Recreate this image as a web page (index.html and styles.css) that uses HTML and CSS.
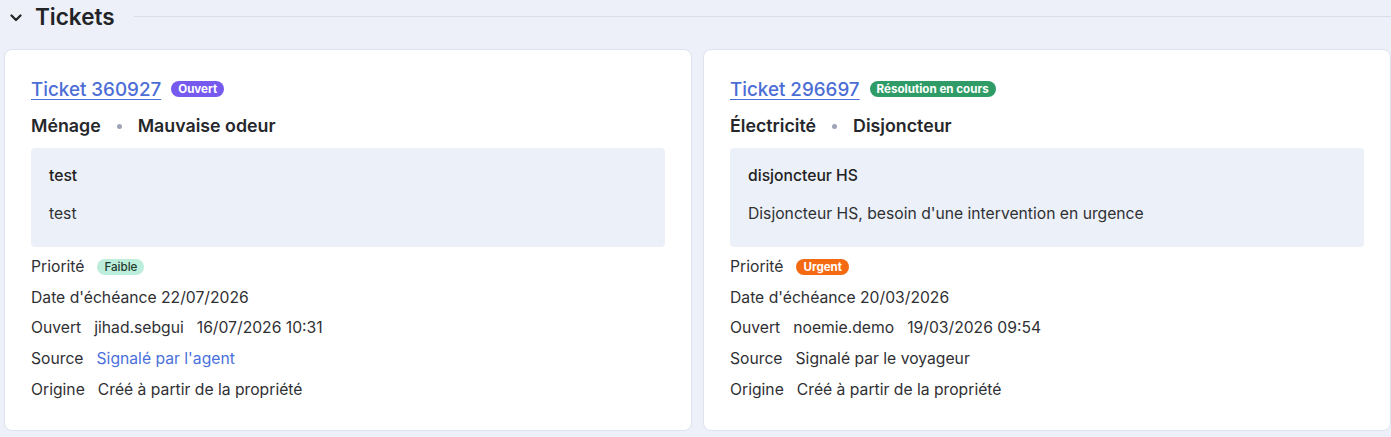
FILE: index.html
```html
<!DOCTYPE html>
<html lang="fr">
<head>
<meta charset="utf-8">
<title>Tickets</title>
<link rel="stylesheet" href="styles.css">
</head>
<body>
<section class="section">
  <header class="section-head">
    <svg class="chevron" viewBox="0 0 12 8" width="12" height="8"><path d="M1.5 1.5 L6 6 L10.5 1.5" fill="none" stroke="#222" stroke-width="2.2" stroke-linecap="round" stroke-linejoin="round"/></svg>
    <h2 class="section-title">Tickets</h2>
    <div class="section-line"></div>
  </header>
  <div class="cards">
    <article class="card">
      <div class="card-head">
        <a class="ticket-link" href="#">Ticket 360927</a>
        <span class="badge badge-open">Ouvert</span>
      </div>
      <div class="subtitle"><span>Ménage</span><span class="dot"></span><span>Mauvaise odeur</span></div>
      <div class="desc">
        <div class="desc-title">test</div>
        <div class="desc-body">test</div>
      </div>
      <div class="fields">
        <div class="field"><span class="label">Priorité</span><span class="badge badge-low">Faible</span></div>
        <div class="field">Date d'échéance 22/07/2026</div>
        <div class="field"><span class="label">Ouvert</span><span>jihad.sebgui</span><span>16/07/2026 10:31</span></div>
        <div class="field"><span class="label">Source</span><span class="link">Signalé par l'agent</span></div>
        <div class="field"><span class="label">Origine</span><span>Créé à partir de la propriété</span></div>
      </div>
    </article>
    <article class="card">
      <div class="card-head">
        <a class="ticket-link" href="#">Ticket 296697</a>
        <span class="badge badge-progress">Résolution en cours</span>
      </div>
      <div class="subtitle"><span>Électricité</span><span class="dot"></span><span>Disjoncteur</span></div>
      <div class="desc">
        <div class="desc-title">disjoncteur HS</div>
        <div class="desc-body">Disjoncteur HS, besoin d'une intervention en urgence</div>
      </div>
      <div class="fields">
        <div class="field"><span class="label">Priorité</span><span class="badge badge-urgent">Urgent</span></div>
        <div class="field">Date d'échéance 20/03/2026</div>
        <div class="field"><span class="label">Ouvert</span><span>noemie.demo</span><span>19/03/2026 09:54</span></div>
        <div class="field"><span class="label">Source</span><span>Signalé par le voyageur</span></div>
        <div class="field"><span class="label">Origine</span><span>Créé à partir de la propriété</span></div>
      </div>
    </article>
  </div>
</section>
</body>
</html>
```
FILE: styles.css
```css
html, body {
  margin: 0;
  padding: 0;
  background: #edf0f8;
  font-family: Inter, "Noto Sans", "Liberation Sans", sans-serif;
  color: #2a2b30;
  overflow: hidden;
}

.section {
  padding: 0 0 0 4px;
}

.section-head {
  display: flex;
  align-items: center;
  height: 34px;
  padding-left: 6px;
}

.chevron {
  flex: none;
  margin-top: 1px;
}

.section-title {
  margin: 0 0 0 13px;
  font-size: 22.5px;
  font-weight: 600;
  color: #222326;
  line-height: 34px;
}

.section-line {
  flex: 1;
  height: 1px;
  background: #d8dde9;
  margin-left: 19px;
  margin-top: -2px;
}

.cards {
  display: grid;
  grid-template-columns: 688px 688px;
  gap: 11px;
  margin-top: 15px;
}

.card {
  background: #fff;
  border: 1px solid #dfe3ee;
  border-radius: 8px;
  padding: 27px 26px 29px;
}

.card-head {
  display: flex;
  align-items: center;
  gap: 10px;
  height: 24px;
}

.ticket-link {
  font-size: 18.8px;
  font-weight: 500;
  color: #4b6dd5;
  text-decoration: underline;
  text-underline-offset: 3px;
  text-decoration-thickness: 1px;
}

.badge {
  display: inline-block;
  font-size: 11.6px;
  font-weight: 700;
  line-height: 16px;
  padding: 0 7px;
  border-radius: 8px;
  color: #fff;
}

.badge-open { background: #7659ee; }
.badge-progress { background: #2f9c68; }
.badge-urgent { background: #f36a12; }
.badge-low {
  background: #bdeedb;
  color: #1e3b30;
  font-weight: 500;
}

.subtitle {
  display: flex;
  align-items: center;
  margin-top: 14px;
  font-size: 17.8px;
  font-weight: 600;
  line-height: 22px;
  color: #26272b;
}

.dot {
  width: 5px;
  height: 5px;
  border-radius: 50%;
  background: #9ea3b6;
  margin: 0 16px 0 16px;
}

.desc {
  margin-top: 11px;
  background: #ecf0f8;
  border-radius: 4px;
  padding: 17px 18px 22px;
  font-size: 15.7px;
  line-height: 22px;
}

.desc-title {
  font-weight: 500;
  color: #222;
}

.desc-body {
  margin-top: 16px;
  color: #2f3034;
}

.fields {
  margin-top: 9px;
  display: flex;
  flex-direction: column;
  gap: 8.7px;
  font-size: 15.7px;
  line-height: 22px;
  color: #2f3034;
}

.field {
  display: flex;
  align-items: center;
  gap: 13px;
  height: 22px;
}

.link {
  color: #4a70db;
}
```
